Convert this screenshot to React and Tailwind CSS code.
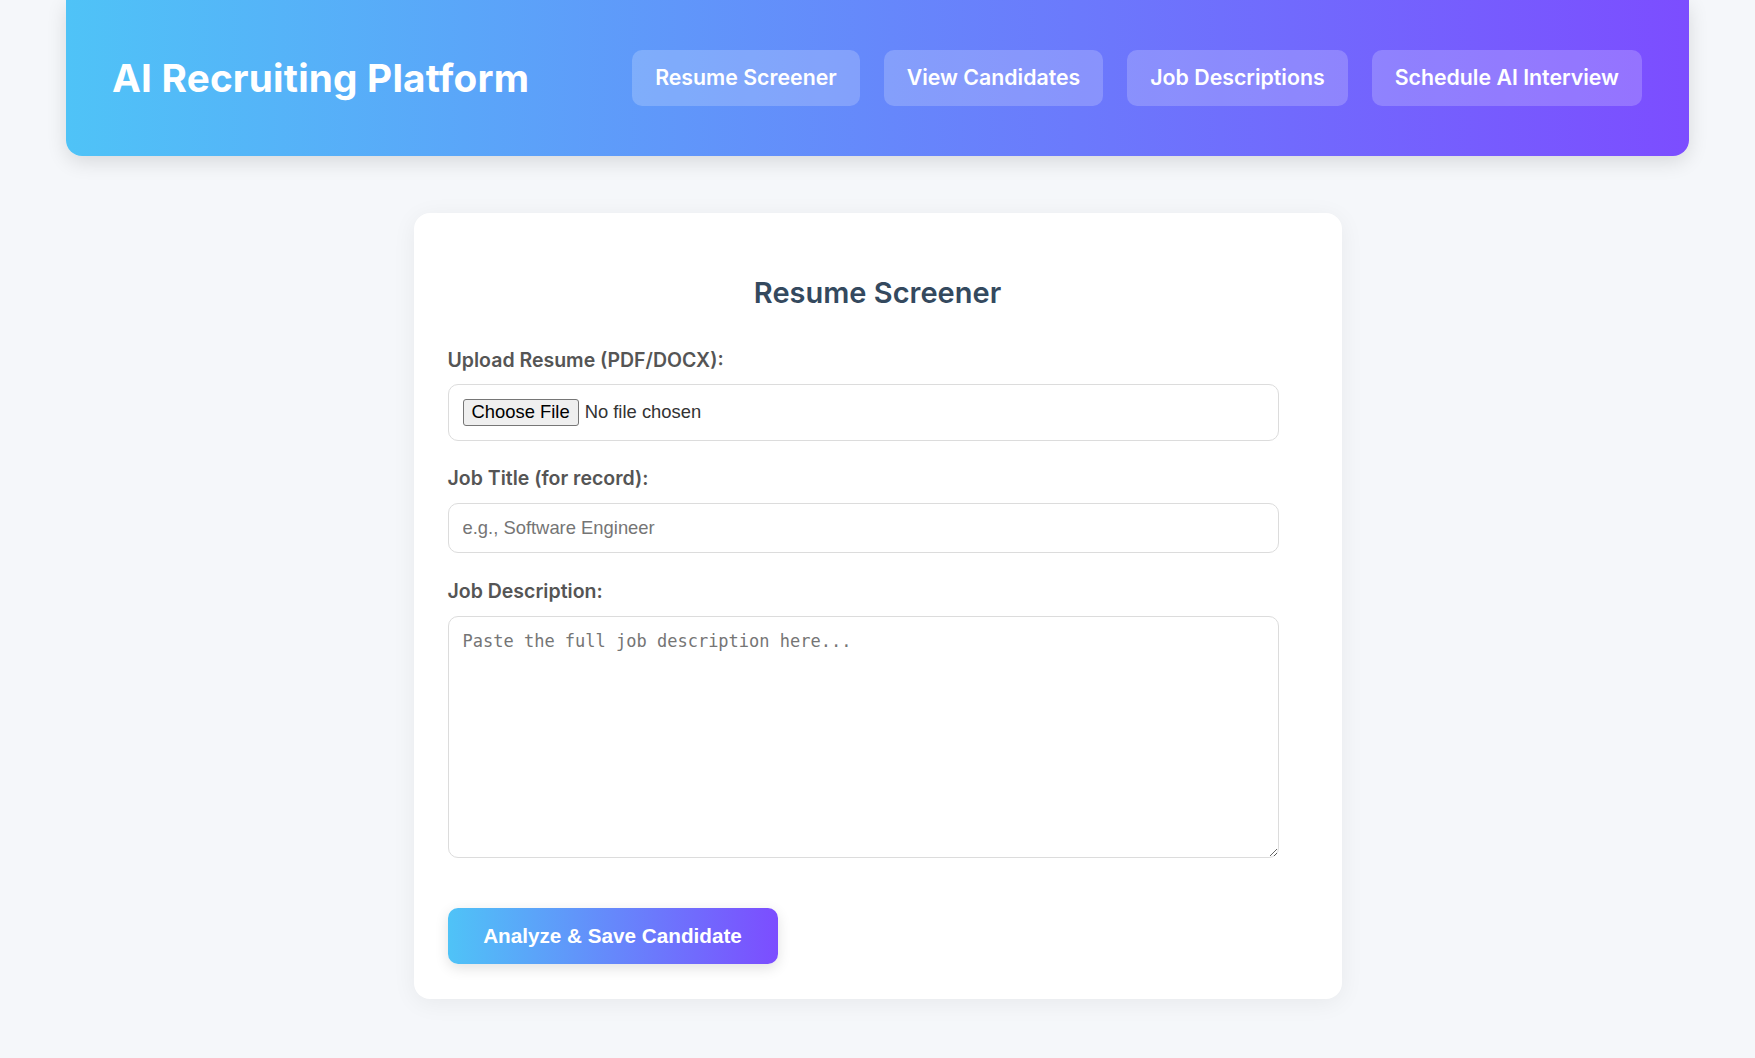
import React from "react";

export default function App() {
  const navItems = ["Resume Screener", "View Candidates", "Job Descriptions", "Schedule AI Interview"];
  return (
    <div className="min-h-screen bg-[#f5f7fa] font-['Inter',sans-serif]">
      <header className="mx-[66px] h-[156px] rounded-b-[16px] bg-linear-to-r/srgb from-[#4fc3f7] to-[#7c4dff] shadow-[0_6px_20px_rgba(0,0,0,0.12)] flex items-center justify-between pl-[46px] pr-[47px]">
        <h1 className="text-white font-bold text-[38.7px] leading-none tracking-[0.2px] font-['Inter',sans-serif]">
          AI Recruiting Platform
        </h1>
        <nav className="flex gap-[24px]">
          {navItems.map((t) => (
            <button
              key={t}
              className="h-[56px] px-[23px] rounded-[10px] bg-white/20 text-white font-semibold text-[21.3px] font-['Inter',sans-serif]"
            >
              {t}
            </button>
          ))}
        </nav>
      </header>

      <main className="flex justify-center pt-[57px] pb-[60px]">
        <section className="w-[928px] bg-white rounded-[16px] shadow-[0_4px_24px_rgba(0,0,0,0.06)] pl-[34px] pr-[34px] pt-[63px] pb-[35px]">
          <h2 className="text-center text-[#34495e] font-semibold text-[29px] leading-[1.2] font-['Inter',sans-serif]">
            Resume Screener
          </h2>
          <form className="w-[831px] mt-[36px]" onSubmit={(e) => e.preventDefault()}>
            <label className="block text-[#555] font-semibold text-[19.5px] leading-[27px] mb-[10px] font-['Inter',sans-serif]">
              Upload Resume (PDF/DOCX):
            </label>
            <div className="h-[57px] border border-[#dcdcdc] rounded-[10px] flex items-center pl-[14px] font-['Liberation_Sans',Arial,sans-serif] text-[18.4px]">
              <span className="h-[27px] flex items-center px-[8px] border border-[#767676] bg-[#efefef] rounded-[3px] text-black leading-none">
                Choose File
              </span>
              <span className="ml-[6px] text-[#333]">No file chosen</span>
            </div>

            <label className="block text-[#555] font-semibold text-[19.5px] leading-[27px] mt-[24px] mb-[11px] font-['Inter',sans-serif]">
              Job Title (for record):
            </label>
            <input
              type="text"
              placeholder="e.g., Software Engineer"
              className="block w-full h-[50px] border border-[#dcdcdc] rounded-[10px] px-[14px] text-[18.4px] font-['Liberation_Sans',Arial,sans-serif] placeholder:text-[#757575] outline-none"
            />

            <label className="block text-[#555] font-semibold text-[19.5px] leading-[27px] mt-[25px] mb-[11px] font-['Inter',sans-serif]">
              Job Description:
            </label>
            <textarea
              placeholder="Paste the full job description here..."
              className="block w-full h-[242px] border border-[#dcdcdc] rounded-[10px] px-[14px] py-[13px] text-[17px] leading-[1.35] font-['DejaVu_Sans_Mono',monospace] placeholder:text-[#757575] outline-none resize-y"
            />

            <button
              type="submit"
              className="mt-[50px] h-[56px] w-[330px] rounded-[10px] bg-linear-to-r/srgb from-[#4fc3f7] to-[#7c4dff] text-white font-bold text-[20.7px] font-['Liberation_Sans',Arial,sans-serif] shadow-[0_4px_14px_rgba(0,0,0,0.12)]"
            >
              Analyze &amp; Save Candidate
            </button>
          </form>
        </section>
      </main>
    </div>
  );
}
